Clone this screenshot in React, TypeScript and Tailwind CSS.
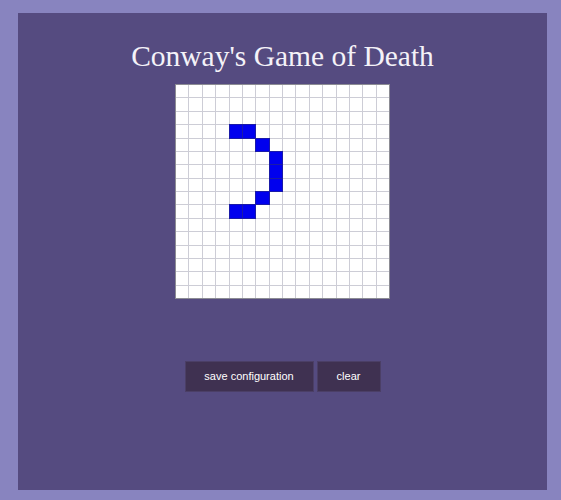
import React from 'react';

const SIZE = 16;

// live cells as [row, col]
const LIVE: [number, number][] = [
    [3, 4], [3, 5],
    [4, 6],
    [5, 7], [6, 7], [7, 7],
    [8, 6],
    [9, 4], [9, 5],
];

function Board() {
    const isLive = (r: number, c: number) => LIVE.some(([lr, lc]) => lr === r && lc === c);
    const cells = [];
    for (let r = 0; r < SIZE; r++) {
        for (let c = 0; c < SIZE; c++) {
            cells.push(
                <div
                    key={`${r}-${c}`}
                    className={isLive(r, c) ? 'bg-[#0000ee] outline outline-1 outline-[#1a1aa8]' : 'bg-white'}
                />
            );
        }
    }
    return (
        <div className="border border-[#8c8c94] w-[215px] h-[215px]">
            <div className="grid grid-cols-16 grid-rows-16 gap-px bg-[#cdcdd6] w-[213px] h-[213px]">
                {cells}
            </div>
        </div>
    );
}

export default function App() {
    return (
        <div className="min-h-[500px] w-[561px] bg-[#8884bf] pt-[13px] pl-[18px]">
            <div className="w-[529px] h-[477px] bg-[#554b80] flex flex-col items-center">
                <h1
                    className="mt-[26px] text-[29.5px] leading-[34px] text-[#f4f2f8]"
                    style={{ fontFamily: '"Liberation Serif", "Times New Roman", serif' }}
                >
                    Conway's Game of Death
                </h1>
                <div className="mt-[11px]">
                    <Board />
                </div>
                <div
                    className="mt-[62px] flex gap-[3px] text-[11px] text-white"
                    style={{ fontFamily: '"Liberation Sans", Arial, sans-serif' }}
                >
                    <button className="w-[129px] h-[31px] bg-[#3f3151] border border-[#4b3f66]">
                        save configuration
                    </button>
                    <button className="w-[64px] h-[31px] bg-[#3f3151] border border-[#4b3f66]">
                        clear
                    </button>
                </div>
            </div>
        </div>
    );
}
